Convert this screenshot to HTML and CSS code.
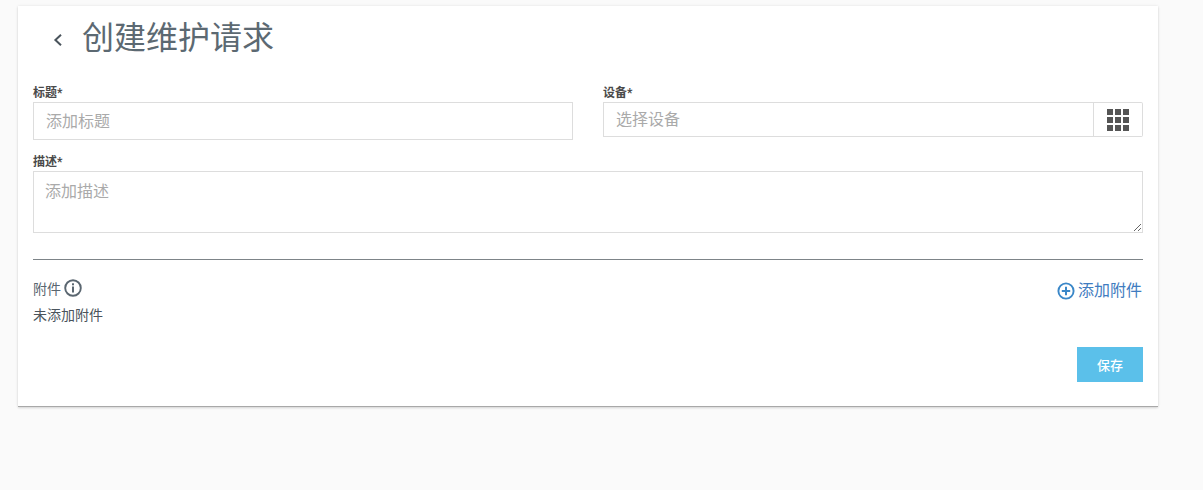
FILE: index.html
```html
<!DOCTYPE html>
<html lang="zh-CN">
<head>
  <meta charset="UTF-8" />
  <title>创建维护请求</title>
  <link rel="stylesheet" href="styles.css">
</head>
<body>

<div class="tarjeta">
  <div class="encabezado">
    <a class="volver" href="#" title="返回">
      <svg width="10" height="14" viewBox="0 0 10 14"><path d="M8 1.8 2.4 7 8 12.2" fill="none" stroke="#4a545c" stroke-width="2"/></svg>
    </a>
    <h1>创建维护请求</h1>
  </div>

  <form class="formulario">
    <div class="fila">
      <div class="campo">
        <label for="titulo">标题*</label>
        <input type="text" id="titulo" class="entrada" placeholder="添加标题" />
      </div>
      <div class="campo">
        <label for="equipo">设备*</label>
        <div class="grupo">
          <input type="text" id="equipo" class="entrada baja" placeholder="选择设备" />
          <button type="button" class="boton-rejilla" title="选择设备">
            <svg width="22" height="22" viewBox="0 0 22 22" fill="#555">
              <rect x="0" y="0" width="6" height="6"/><rect x="8" y="0" width="6" height="6"/><rect x="16" y="0" width="6" height="6"/>
              <rect x="0" y="8" width="6" height="6"/><rect x="8" y="8" width="6" height="6"/><rect x="16" y="8" width="6" height="6"/>
              <rect x="0" y="16" width="6" height="6"/><rect x="8" y="16" width="6" height="6"/><rect x="16" y="16" width="6" height="6"/>
            </svg>
          </button>
        </div>
      </div>
    </div>

    <div class="campo-descripcion">
      <label for="descripcion">描述*</label>
      <textarea id="descripcion" class="entrada area" placeholder="添加描述"></textarea>
    </div>

    <hr class="separador" />

    <div class="adjuntos">
      <div>
        <div class="adjuntos-titulo">
          <span>附件</span>
          <svg width="18" height="18" viewBox="0 0 18 18">
            <circle cx="9" cy="9" r="7.8" fill="none" stroke="#5a6670" stroke-width="1.9"/>
            <rect x="8" y="7.5" width="2" height="6" fill="#5a6670"/>
            <rect x="8" y="4.3" width="2" height="2" fill="#5a6670"/>
          </svg>
        </div>
        <p class="sin-adjuntos">未添加附件</p>
      </div>
      <a class="agregar" href="#">
        <svg width="18" height="18" viewBox="0 0 18 18">
          <circle cx="9" cy="9" r="7.6" fill="none" stroke="#3a87c8" stroke-width="1.9"/>
          <path d="M9 4.8v8.4M4.8 9h8.4" stroke="#3a87c8" stroke-width="2"/>
        </svg>
        <span class="agregar-texto">添加附件</span>
      </a>
    </div>

    <div class="acciones">
      <button type="submit" class="guardar">保存</button>
    </div>
  </form>
</div>

</body>
</html>
```

FILE: styles.css
```css
* {
  box-sizing: border-box;
}

body {
  margin: 0;
  min-height: 100vh;
  padding: 6px 0 0 18px;
  background-color: #fafafa;
  font-family: 'Roboto', 'Noto Sans CJK SC', sans-serif;
  color: #4a545c;
}

.tarjeta {
  width: 1140px;
  height: 401px;
  padding: 0 15px;
  border-bottom: 1px solid #a8a8a8;
  background-color: #fff;
  box-shadow: 0 1px 2px rgba(0, 0, 0, 0.12), 0 0 3px rgba(0, 0, 0, 0.08);
}

.encabezado {
  display: flex;
  align-items: center;
  height: 62px;
  padding-left: 20px;
}

.volver {
  display: flex;
  margin-right: 19px;
  margin-top: 6px;
}

h1 {
  margin: 0;
  padding-top: 1px;
  font-size: 32px;
  font-weight: 400;
  line-height: 60px;
  color: #5c6972;
}

label {
  display: block;
  height: 18px;
  padding-top: 1px;
  font-size: 12px;
  line-height: 16px;
  font-weight: 700;
  color: #4a4a4a;
}

.fila {
  display: flex;
  gap: 30px;
  margin-top: 16px;
}

.campo {
  width: 540px;
}

.entrada {
  display: block;
  width: 100%;
  height: 38px;
  padding: 0 12px;
  border: 1px solid #ddd;
  border-radius: 0;
  background-color: #fff;
  font-family: inherit;
  font-size: 16px;
  color: #4a545c;
  outline: none;
}

.entrada::placeholder {
  color: #aaa;
  opacity: 1;
}

.grupo {
  display: flex;
}

.baja {
  flex: 1;
  height: 35px;
}

.boton-rejilla {
  display: flex;
  align-items: center;
  justify-content: center;
  width: 49px;
  height: 35px;
  padding: 0;
  border: 1px solid #ddd;
  border-left: none;
  border-radius: 0 2px 2px 0;
  background-color: #fff;
  cursor: pointer;
}

.campo-descripcion {
  margin-top: 13px;
}

.area {
  height: 62px;
  padding: 6px 11px;
  resize: vertical;
}

.separador {
  height: 1px;
  margin: 26px 0 0;
  border: none;
  background-color: #7d8488;
}

.adjuntos {
  display: flex;
  justify-content: space-between;
  margin-top: 18px;
}

.adjuntos-titulo {
  display: flex;
  align-items: center;
  gap: 3px;
  height: 20px;
  font-size: 14px;
  color: #5a6670;
}

.sin-adjuntos {
  margin: 7px 0 0;
  font-size: 14px;
  line-height: 20px;
  color: #4a545c;
}

.agregar {
  display: flex;
  align-items: center;
  gap: 3px;
  height: 26px;
  padding-right: 1px;
  font-size: 16px;
  color: #3f7cc0;
  text-decoration: none;
}

.agregar-texto {
  padding-bottom: 4px;
}

.acciones {
  display: flex;
  justify-content: flex-end;
  margin-top: 22px;
}

.guardar {
  width: 66px;
  height: 35px;
  border: none;
  background-color: #5bc0ea;
  color: #fff;
  font-family: inherit;
  font-size: 13px;
  font-weight: 500;
  cursor: pointer;
}
```
